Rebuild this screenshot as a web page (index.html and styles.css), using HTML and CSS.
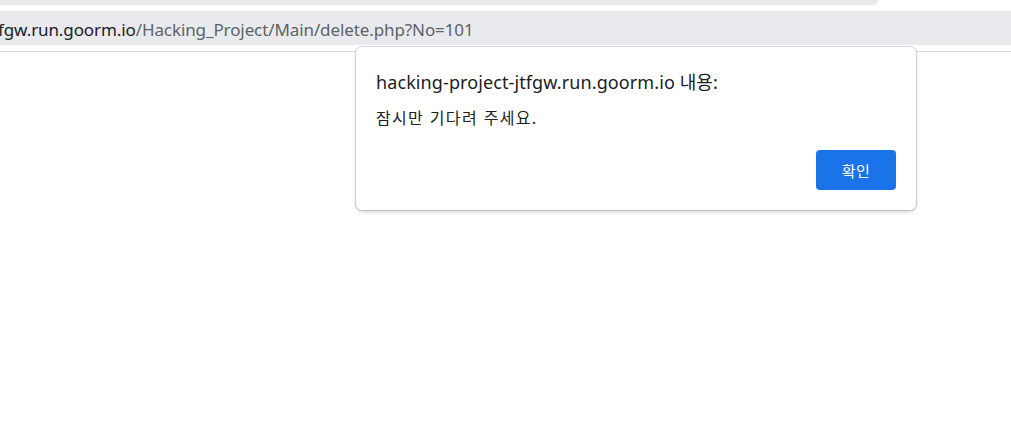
FILE: index.html
```html
<!DOCTYPE html>
<html lang="ko">
<head>
<meta charset="utf-8">
<title>delete.php</title>
<link rel="stylesheet" href="styles.css">
</head>
<body>
<div class="chrome">
  <div class="tabstrip"><div class="tab"></div></div>
  <div class="omnibox"><span class="url"><span class="host">fgw.run.goorm.io</span><span class="path">/Hacking_Project/Main/delete.php?No=101</span></span></div>
  <div class="gap"></div>
  <div class="divider"></div>
</div>
<div class="page"></div>
<div class="dialog" role="alertdialog">
  <div class="title">hacking-project-jtfgw.run.goorm.io 내용:</div>
  <div class="message">잠시만 기다려 주세요.</div>
  <div class="actions"><button class="ok">확인</button></div>
</div>
</body>
</html>
```
FILE: styles.css
```css
html, body { margin: 0; padding: 0; background: #fff; }
body { width: 1011px; height: 448px; overflow: hidden; position: relative; font-family: "Noto Sans", "Noto Sans CJK KR", sans-serif; }
.chrome { display: flex; flex-direction: column; }
.tabstrip { height: 11px; display: flex; }
.tab { width: 878px; height: 5px; background: #e8eaed; border-bottom-right-radius: 6px; }
.omnibox { height: 34px; background: #e8eaed; display: flex; align-items: center; overflow: hidden; }
.url { font-size: 17px; margin-left: -2px; white-space: nowrap; letter-spacing: -0.1px; padding-top: 2px; }
.host { color: #202124; }
.path { color: #5f6368; }
.gap { height: 6px; }
.divider { height: 1px; background: #dadce0; }
.dialog {
  position: absolute; left: 356px; top: 47px; width: 560px; height: 163px; box-sizing: border-box;
  background: #fff; border-radius: 6px;
  box-shadow: 0 0 0 1px rgba(0,0,0,0.12), 0 2px 4px rgba(0,0,0,0.18);
  padding: 22px 20px 20px 20px; display: flex; flex-direction: column;
}
.title { font-size: 18px; color: #202124; line-height: 26px; white-space: nowrap; letter-spacing: 0.1px; }
.message { font-size: 16px; color: #202124; line-height: 22px; margin-top: 11px; letter-spacing: 1.3px; font-family: "Noto Sans CJK KR", sans-serif; }
.actions { margin-top: auto; display: flex; justify-content: flex-end; }
.ok { width: 80px; height: 40px; border: 0; border-radius: 4px; background: #1a73e8; color: #fff; font-size: 15px; font-family: "Noto Sans CJK KR", sans-serif; padding: 0; letter-spacing: 0.5px; }
```
